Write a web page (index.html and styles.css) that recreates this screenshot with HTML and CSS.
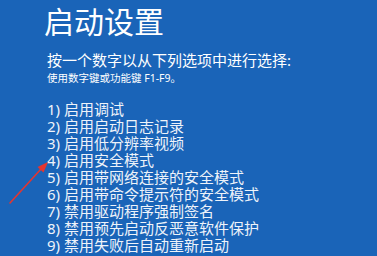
FILE: index.html
```html
<!DOCTYPE html>
<html lang="zh-CN">

<head>
    <meta charset="UTF-8">
    <meta name="viewport" content="width=device-width, initial-scale=1.0">
    <title>启动设置</title>
    <link rel="stylesheet" href="styles.css">
</head>

<body>
    <div class="screen">
        <h1 class="title">启动设置</h1>
        <p class="tip">按一个数字以从下列选项中进行选择:</p>
        <p class="hint">使用数字键或功能键 F1-F9。</p>
        <ol class="options">
            <li>1) 启用调试</li>
            <li>2) 启用启动日志记录</li>
            <li>3) 启用低分辨率视频</li>
            <li>4) 启用安全模式</li>
            <li>5) 启用带网络连接的安全模式</li>
            <li>6) 启用带命令提示符的安全模式</li>
            <li>7) 禁用驱动程序强制签名</li>
            <li>8) 禁用预先启动反恶意软件保护</li>
            <li>9) 禁用失败后自动重新启动</li>
        </ol>
    </div>

    <svg class="arrow" width="377" height="256" viewBox="0 0 377 256">
        <line x1="10" y1="203" x2="41" y2="169" stroke="#e5352f" stroke-width="1.6" stroke-linecap="round" />
        <polygon points="48,162 43.5,172.5 37.5,167" fill="#e5352f" />
    </svg>
</body>

</html>
```

FILE: styles.css
```css
body {
    margin: 0;
    width: 377px;
    height: 256px;
    overflow: hidden;
    background-color: #1a64b8;
    font-family: "Noto Sans", "Noto Sans CJK SC", sans-serif;
    color: #fff;
    position: relative;
}

.screen {
    padding: 7px 0 0 47px;
}

.title {
    margin: 0 0 0 -3px;
    font-size: 30px;
    line-height: 30px;
    font-weight: 400;
}

.tip {
    margin: 14px 0 0 0;
    font-size: 15px;
    line-height: 18px;
}

.hint {
    margin: 2px 0 0 0;
    font-size: 10.5px;
    line-height: 14px;
}

.options {
    list-style: none;
    margin: 16px 0 0 0;
    padding: 0;
    color: #eef3fa;
}

.options li {
    font-size: 15px;
    line-height: 17px;
}

.arrow {
    position: absolute;
    left: 0;
    top: 0;
}
```
